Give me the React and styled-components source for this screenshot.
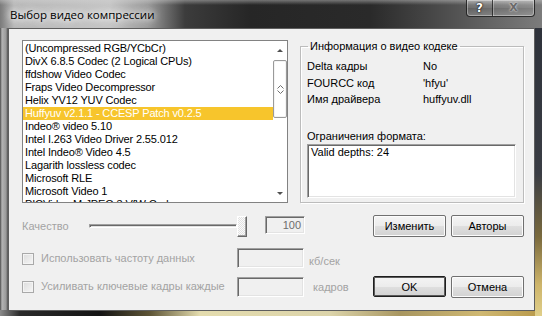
import React from "react";
import styled, { createGlobalStyle } from "styled-components";

const codecs = [
  "(Uncompressed RGB/YCbCr)",
  "DivX 6.8.5 Codec (2 Logical CPUs)",
  "ffdshow Video Codec",
  "Fraps Video Decompressor",
  "Helix YV12 YUV Codec",
  "Huffyuv v2.1.1 - CCESP Patch v0.2.5",
  "Indeo® video 5.10",
  "Intel I.263 Video Driver 2.55.012",
  "Intel Indeo® Video 4.5",
  "Lagarith lossless codec",
  "Microsoft RLE",
  "Microsoft Video 1",
  "PICVideo M-JPEG 3 VfW Codec",
];

const info = [
  ["Delta кадры", "No"],
  ["FOURCC код", "'hfyu'"],
  ["Имя драйвера", "huffyuv.dll"],
];

const GlobalStyle = createGlobalStyle`
  html, body {
    margin: 0;
    padding: 0;
    background: #1a1a1a;
  }
  body {
    font-family: "Liberation Sans", Arial, sans-serif;
    font-size: 11px;
    color: #000;
  }
`;

export default function App() {
  return (
    <>
      <GlobalStyle />
      <Window>
        <TitleBar>
          <Title>Выбор видео компрессии</Title>
          <CaptionGroup>
            <CaptionButton $width={25}>
              <HelpGlyph>?</HelpGlyph>
            </CaptionButton>
            <CaptionButton $width={41} $divider>
              <CloseGlyph>X</CloseGlyph>
            </CaptionButton>
          </CaptionGroup>
        </TitleBar>

        <Client>
          <TopSection>
            <ListBox>
              <Items>
                {codecs.map((name, i) => (
                  <Item key={name} $selected={i === 5}>
                    {name}
                  </Item>
                ))}
              </Items>
              <ScrollBar>
                <ArrowBox $height={18}>
                  <Triangle $up />
                </ArrowBox>
                <Thumb>
                  <svg width="7" height="9" viewBox="0 0 7 9">
                    <path
                      d="M0.5 3.5 L3.5 0.5 L6.5 3.5 M0.5 5.5 L3.5 8.5 L6.5 5.5"
                      fill="none"
                      stroke="#707070"
                      strokeWidth="1"
                    />
                  </svg>
                </Thumb>
                <Track />
                <ArrowBox $height={17}>
                  <Triangle />
                </ArrowBox>
              </ScrollBar>
            </ListBox>

            <Group>
              <Legend>Информация о видео кодеке</Legend>
              <InfoGrid>
                {info.map(([k, v]) => (
                  <React.Fragment key={k}>
                    <span>{k}</span>
                    <span>{v}</span>
                  </React.Fragment>
                ))}
              </InfoGrid>
              <FormatLabel>Ограничения формата:</FormatLabel>
              <FormatBox>Valid depths: 24</FormatBox>
            </Group>
          </TopSection>

          <Row $top={12} $height={22}>
            <DisabledText $width={67} $line={22}>
              Качество
            </DisabledText>
            <Slider>
              <SliderTrack />
              <SliderThumb />
            </Slider>
            <ValueBox>100</ValueBox>
            <Spacer $width={68} />
            <Button>Изменить</Button>
            <Button $gap>Авторы</Button>
          </Row>

          <Row $top={11} $height={20}>
            <CheckField>
              <CheckBox />
              <DisabledText $line={20}>Использовать частоту данных</DisabledText>
            </CheckField>
            <EditBox />
            <Unit $pad={5} $shift={3}>
              кб/сек
            </Unit>
          </Row>

          <Row $top={8} $height={21}>
            <CheckField>
              <CheckBox />
              <DisabledText $line={20}>
                Усиливать ключевые кадры каждые
              </DisabledText>
            </CheckField>
            <EditBox $offset={1} />
            <Unit $pad={9} $shift={1}>
              кадров
            </Unit>
            <Button $default>OK</Button>
            <Button $gap>Отмена</Button>
          </Row>
        </Client>
      </Window>
    </>
  );
}

const Window = styled.div`
  width: 542px;
  height: 316px;
  display: flex;
  flex-direction: column;
  overflow: hidden;
  background:
    linear-gradient(to bottom, #2c3039 0%, #3a3d44 55%, #7a6a3e 75%, #cdb46a 90%, #e0cf8a 100%)
      right top / 7px 100% no-repeat,
    linear-gradient(
        to right,
        #8a8a8a 0,
        #2a2a2a 20px,
        #141414 100px,
        #5e5536 150px,
        #e4dcae 200px,
        #dcd4aa 330px,
        #a89660 400px,
        #cfb872 480px,
        #b89848 542px
      )
      left bottom / 100% 6px no-repeat,
    linear-gradient(to right, #4a4a4a 0, #b4b4b4 2px, #9a9a9a 6px, #505050 8px)
      left top / 8px 100% no-repeat,
    #555;
`;

const TitleBar = styled.div`
  height: 28px;
  flex-shrink: 0;
  display: flex;
  justify-content: space-between;
  align-items: flex-start;
  padding: 0 7px 0 10px;
  box-sizing: border-box;
  background:
    linear-gradient(to bottom, rgba(210, 210, 210, 0.45) 0, rgba(210, 210, 210, 0) 5px),
    linear-gradient(
      to right,
      #7a7a7a 0,
      #b8b8b8 14px,
      #c6c6c6 110px,
      #9a9a9a 148px,
      #3c3c3c 185px,
      #262626 250px,
      #2a2a2a 370px,
      #464646 430px,
      #646464 490px,
      #7c7c7c 542px
    );
`;

const Title = styled.div`
  font-family: "Open Sans", "Noto Sans", sans-serif;
  font-size: 11.5px;
  line-height: 16px;
  margin-top: 7px;
  color: #000;
  text-shadow: 0 0 6px #fff, 0 0 10px rgba(255, 255, 255, 0.9),
    0 0 14px rgba(255, 255, 255, 0.7);
`;

const CaptionGroup = styled.div`
  display: flex;
  height: 17px;
  box-sizing: border-box;
  border: 1px solid rgba(25, 25, 25, 0.85);
  border-top: none;
  border-radius: 0 0 4px 4px;
  overflow: hidden;
  background: linear-gradient(
    to bottom,
    rgba(255, 255, 255, 0.28),
    rgba(255, 255, 255, 0.12) 50%,
    rgba(255, 255, 255, 0.05) 51%,
    rgba(255, 255, 255, 0.2)
  );
  box-shadow: inset 0 0 0 1px rgba(255, 255, 255, 0.35);
`;

const CaptionButton = styled.div`
  width: ${({ $width }) => $width}px;
  display: flex;
  align-items: center;
  justify-content: center;
  border-left: ${({ $divider }) =>
    $divider ? "1px solid rgba(20, 20, 20, 0.7)" : "none"};
  box-shadow: ${({ $divider }) =>
    $divider ? "inset 1px 0 0 rgba(255,255,255,0.3)" : "none"};
`;

const HelpGlyph = styled.span`
  font-family: "DejaVu Sans", sans-serif;
  font-weight: bold;
  font-size: 12px;
  line-height: 14px;
  color: #fff;
  text-shadow: 0 0 2px #000, 0 0 1px #000;
`;

const CloseGlyph = styled.span`
  font-family: "DejaVu Sans", sans-serif;
  font-weight: bold;
  font-size: 11px;
  line-height: 14px;
  color: #6a6a6a;
  text-shadow: 0 0 2px #fff;
`;

const Client = styled.div`
  flex: 1;
  margin: 0 7px 5px 8px;
  background: #f0f0f0;
  border: 1px solid #5e5e5e;
  box-sizing: border-box;
  padding: 11px 0 0 13px;
  display: flex;
  flex-direction: column;
`;

const TopSection = styled.div`
  display: flex;
  gap: 12px;
  height: 163px;
`;

const ListBox = styled.div`
  width: 266px;
  height: 163px;
  box-sizing: border-box;
  border: 1px solid #828282;
  padding-top: 1px;
  background: #fff;
  display: flex;
`;

const Items = styled.div`
  flex: 1;
  overflow: hidden;
  letter-spacing: -0.15px;
`;

const Item = styled.div`
  height: 13px;
  line-height: 13px;
  padding-left: 2px;
  white-space: nowrap;
  background: ${({ $selected }) => ($selected ? "#f7c52c" : "transparent")};
  color: ${({ $selected }) => ($selected ? "#fff" : "#000")};
`;

const ScrollBar = styled.div`
  width: 14px;
  margin-top: -1px;
  display: flex;
  flex-direction: column;
  background: #fff;
`;

const ArrowBox = styled.div`
  height: ${({ $height }) => $height}px;
  display: flex;
  align-items: center;
  justify-content: center;
`;

const Triangle = styled.div`
  width: 0;
  height: 0;
  border-left: 3px solid transparent;
  border-right: 3px solid transparent;
  ${({ $up }) =>
    $up ? "border-bottom: 3px solid #505050;" : "border-top: 3px solid #505050;"}
`;

const Thumb = styled.div`
  height: 58px;
  margin: 1px 0 0 0;
  box-sizing: border-box;
  border: 1px solid #9a9a9a;
  border-radius: 2px;
  background: #fff;
  box-shadow: inset 0 0 0 1px #f4f4f4;
  display: flex;
  align-items: center;
  justify-content: center;
`;

const Track = styled.div`
  flex: 1;
`;

const Group = styled.fieldset`
  width: 224px;
  height: 163px;
  box-sizing: border-box;
  margin: 0;
  padding: 0 6px;
  border: 1px solid #bcbcbc;
  box-shadow: inset 1px 1px 0 #fff, 1px 1px 0 #fff;
`;

const Legend = styled.legend`
  padding: 0 2px;
  margin-left: 1px;
  line-height: 13px;
`;

const InfoGrid = styled.div`
  display: grid;
  grid-template-columns: 116px 1fr;
  grid-auto-rows: 16.5px;
  line-height: 16.5px;
  margin-top: 5px;
`;

const FormatLabel = styled.div`
  line-height: 13px;
  margin-top: 22px;
`;

const FormatBox = styled.div`
  width: 209px;
  height: 54px;
  margin-top: 1px;
  box-sizing: border-box;
  background: #fff;
  border: 1px solid;
  border-color: #a0a0a0 #fff #fff #a0a0a0;
  box-shadow: inset 1px 1px 0 #696969, inset -1px -1px 0 #e3e3e3;
  padding: 1px 3px;
  line-height: 13px;
`;

const Row = styled.div`
  display: flex;
  align-items: flex-start;
  height: ${({ $height }) => $height}px;
  margin-top: ${({ $top }) => $top}px;
`;

const DisabledText = styled.span`
  ${({ $width }) => ($width ? `width: ${$width}px; flex-shrink: 0;` : "")}
  line-height: ${({ $line }) => $line}px;
  color: #a3a3a3;
  white-space: nowrap;
`;

const Slider = styled.div`
  width: 158px;
  height: 22px;
  display: flex;
  align-items: center;
`;

const SliderTrack = styled.div`
  flex: 1;
  height: 4px;
  box-sizing: border-box;
  border: 1px solid;
  border-color: #a0a0a0 #fff #fff #a0a0a0;
  background: #e3e3e3;
  box-shadow: inset 1px 1px 0 #696969;
`;

const SliderThumb = styled.div`
  width: 10px;
  height: 21px;
  margin-top: 1px;
  box-sizing: border-box;
  border: 1px solid;
  border-color: #fff #696969 #696969 #fff;
  box-shadow: inset -1px -1px 0 #a0a0a0;
  background: repeating-conic-gradient(#e2e2e2 0 25%, #fbfbfb 0 50%) 0 0 / 2px
    2px;
`;

const ValueBox = styled.div`
  width: 40px;
  height: 18px;
  margin: 1px 0 0 18px;
  box-sizing: border-box;
  border: 1px solid;
  border-color: #a0a0a0 #fff #fff #a0a0a0;
  box-shadow: inset 1px 1px 0 #696969, inset -1px -1px 0 #e3e3e3;
  background: #f0f0f0;
  color: #6d6d6d;
  text-align: right;
  padding-right: 3px;
  line-height: 16px;
`;

const Spacer = styled.div`
  width: ${({ $width }) => $width}px;
  flex-shrink: 0;
`;

const Button = styled.div`
  width: 73px;
  height: ${({ $default }) => ($default ? 21 : 22)}px;
  margin-left: ${({ $gap }) => ($gap ? 5 : 0)}px;
  box-sizing: border-box;
  border: 1px solid ${({ $default }) => ($default ? "#1e1e1e" : "#707070")};
  border-radius: 2px;
  background: linear-gradient(
    to bottom,
    #f4f4f4 0,
    #ececec 50%,
    #dfdfdf 51%,
    #d2d2d2 100%
  );
  box-shadow: ${({ $default }) =>
    $default ? "inset 0 0 0 1px #5a5a5a" : "inset 0 0 0 1px #fcfcfc"};
  display: flex;
  align-items: center;
  justify-content: center;
  color: #000;
`;

const CheckField = styled.div`
  width: 215px;
  flex-shrink: 0;
  display: flex;
  align-items: flex-start;
  gap: 7px;
`;

const CheckBox = styled.div`
  width: 12px;
  height: 12px;
  margin-top: 5px;
  box-sizing: border-box;
  border: 1px solid #a9a9a9;
  background: linear-gradient(135deg, #dcdcdc, #f6f6f6);
  box-shadow: inset 0 0 0 1px #f4f4f4;
  flex-shrink: 0;
`;

const EditBox = styled.div`
  width: 67px;
  height: 20px;
  margin-top: ${({ $offset = 0 }) => $offset}px;
  box-sizing: border-box;
  border: 1px solid;
  border-color: #a0a0a0 #fff #fff #a0a0a0;
  box-shadow: inset 1px 1px 0 #696969, inset -1px -1px 0 #e3e3e3;
  background: #f0f0f0;
  flex-shrink: 0;
`;

const Unit = styled.span`
  width: 69px;
  flex-shrink: 0;
  box-sizing: border-box;
  padding-left: ${({ $pad }) => $pad}px;
  padding-top: ${({ $shift }) => $shift}px;
  line-height: 20px;
  color: #a3a3a3;
`;
